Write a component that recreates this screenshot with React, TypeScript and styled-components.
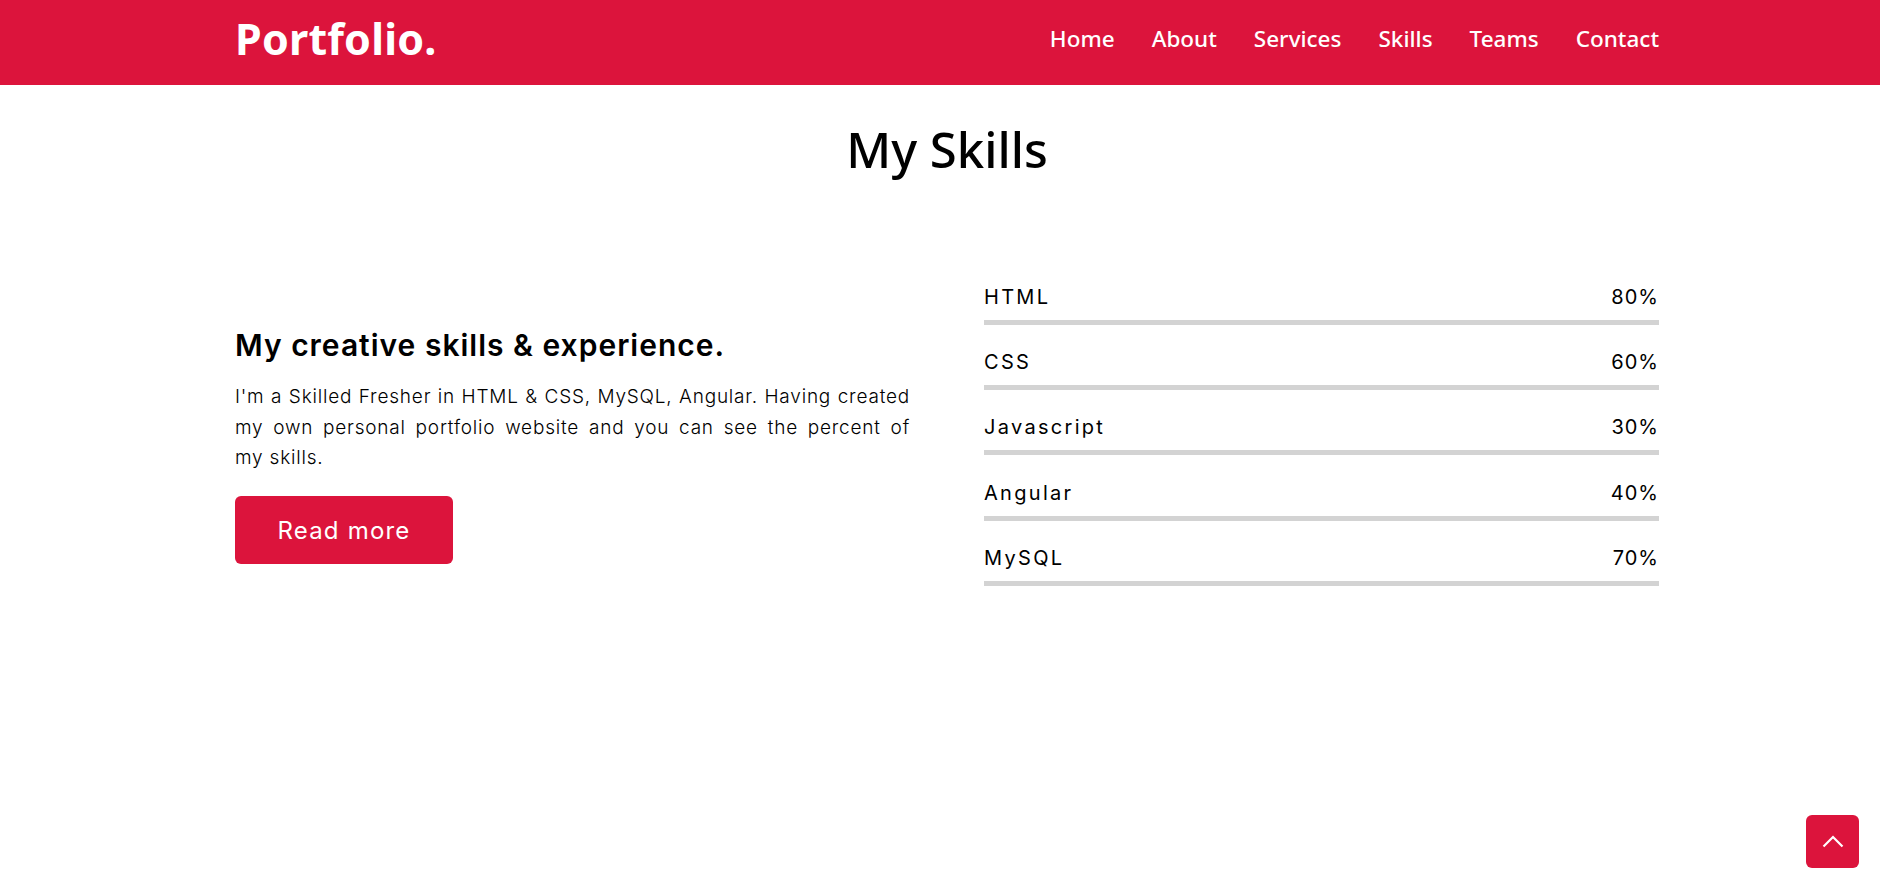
import React from "react";
import styled, { createGlobalStyle } from "styled-components";

const GlobalStyle = createGlobalStyle`
  * { box-sizing: border-box; margin: 0; padding: 0; }
  html, body { background: #fff; }
  body { margin: 0; font-family: "Noto Sans", sans-serif; color: #000; }
`;

const HEAD_FONT = `"Noto Sans", "Open Sans", sans-serif`;
const BODY_FONT = `Inter, "Noto Sans", sans-serif`;
const CRIMSON = "#dc143c";

const NavBar = styled.header`
  height: 85px;
  background: ${CRIMSON};
  display: flex;
  align-items: center;
`;

const Container = styled.div`
  width: 1424px;
  margin-left: 235px;
`;

const NavInner = styled(Container)`
  display: flex;
  align-items: center;
  justify-content: space-between;
  padding-bottom: 8px;
`;

const Logo = styled.a`
  font-family: ${HEAD_FONT};
  font-weight: 700;
  font-size: 43px;
  color: #fff;
  text-decoration: none;
  letter-spacing: 0.2px;
`;

const Menu = styled.ul`
  display: flex;
  list-style: none;
  gap: 37px;
`;

const MenuItem = styled.li`
  font-family: ${HEAD_FONT};
  font-weight: 500;
  font-size: 22.5px;
  color: #fff;
`;

const Section = styled.section`
  padding-top: 33px;
`;

const Title = styled.h2`
  font-family: ${HEAD_FONT};
  font-weight: 500;
  font-size: 49px;
  text-align: center;
  line-height: 1.3;
  margin-bottom: 100px;
`;

const Content = styled.div`
  display: flex;
  justify-content: space-between;
  align-items: center;
`;

const Column = styled.div`
  width: 675px;
`;

const LeftColumn = styled(Column)`
  padding-top: 21px;
`;

const SubHeading = styled.h3`
  font-family: ${BODY_FONT};
  font-weight: 600;
  font-size: 30px;
  line-height: 42px;
  letter-spacing: 1px;
  margin-bottom: 16px;
`;

const Paragraph = styled.p`
  font-family: ${BODY_FONT};
  font-weight: 300;
  font-size: 19px;
  line-height: 30.5px;
  letter-spacing: 0.8px;
  text-align: justify;
`;

const NoWrap = styled.span`
  white-space: nowrap;
`;

const Button = styled.a`
  display: inline-flex;
  align-items: center;
  justify-content: center;
  width: 218px;
  height: 68px;
  margin-top: 22.5px;
  background: ${CRIMSON};
  color: #fff;
  border-radius: 6px;
  font-family: ${BODY_FONT};
  font-size: 24px;
  font-weight: 400;
  letter-spacing: 1.2px;
  text-decoration: none;
`;

const SkillRow = styled.div`
  margin-bottom: 22.3px;
  &:last-child { margin-bottom: 0; }
`;

const SkillInfo = styled.div`
  display: flex;
  justify-content: space-between;
  font-family: ${BODY_FONT};
  font-size: 20px;
  line-height: 30px;
  margin-bottom: 8px;
`;

const SkillName = styled.span`
  letter-spacing: 2.3px;
`;

const SkillPct = styled.span`
  letter-spacing: 1px;
`;

const Bar = styled.div`
  height: 5px;
  background: #d3d3d3;
`;

const TopButton = styled.a`
  position: fixed;
  right: 21px;
  bottom: 2px;
  width: 53px;
  height: 53px;
  border-radius: 6px;
  background: ${CRIMSON};
  display: flex;
  align-items: center;
  justify-content: center;
`;

const skills = [
  { name: "HTML", pct: 80 },
  { name: "CSS", pct: 60 },
  { name: "Javascript", pct: 30 },
  { name: "Angular", pct: 40 },
  { name: "MySQL", pct: 70 },
];

export default function App() {
  return (
    <>
      <GlobalStyle />
      <NavBar>
        <NavInner>
          <Logo href="#">Portfolio.</Logo>
          <Menu>
            {["Home", "About", "Services", "Skills", "Teams", "Contact"].map((m) => (
              <MenuItem key={m}>{m}</MenuItem>
            ))}
          </Menu>
        </NavInner>
      </NavBar>
      <Section>
        <Container>
          <Title>My Skills</Title>
          <Content>
            <LeftColumn>
              <SubHeading>My creative skills &amp; experience.</SubHeading>
              <Paragraph>
                I'm a Skilled Fresher in HTML &amp; CSS, MySQL, Angular. Having created my own personal
                portfolio website and you can see the percent of <NoWrap>my skills.</NoWrap>
              </Paragraph>
              <Button href="#">Read more</Button>
            </LeftColumn>
            <Column>
              {skills.map((s) => (
                <SkillRow key={s.name}>
                  <SkillInfo>
                    <SkillName>{s.name}</SkillName>
                    <SkillPct>{s.pct}%</SkillPct>
                  </SkillInfo>
                  <Bar />
                </SkillRow>
              ))}
            </Column>
          </Content>
        </Container>
      </Section>
      <TopButton href="#">
        <svg width="22" height="13" viewBox="0 0 22 13" fill="none">
          <path d="M1.5 11.5 L11 2 L20.5 11.5" stroke="#fff" strokeWidth="2.2" />
        </svg>
      </TopButton>
    </>
  );
}
